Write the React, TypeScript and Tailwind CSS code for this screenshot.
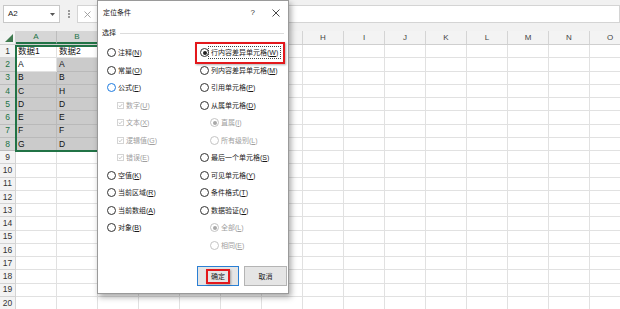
import React from "react";

const COLS = ["A", "B", "C", "D", "E", "F", "G", "H", "I", "J", "K", "L", "M", "N", "O"];

const DATA: Record<number, [string, string]> = {
  1: ["数据1", "数据2"],
  2: ["A", "A"],
  3: ["B", "B"],
  4: ["C", "H"],
  5: ["D", "D"],
  6: ["E", "E"],
  7: ["F", "F"],
  8: ["G", "D"],
};

const FONT = { fontFamily: '"Liberation Sans", "Noto Sans CJK SC", sans-serif' };

interface OptItem {
  kind: "radio" | "check";
  text: string;
  hot: string;
  checked?: boolean;
  disabled?: boolean;
  indent?: boolean;
  focus?: boolean;
  mark?: boolean;
}

const LEFT: OptItem[] = [
  { kind: "radio", text: "注释", hot: "N" },
  { kind: "radio", text: "常量", hot: "O" },
  { kind: "radio", text: "公式", hot: "F", focus: true },
  { kind: "check", text: "数字", hot: "U", checked: true, disabled: true, indent: true },
  { kind: "check", text: "文本", hot: "X", checked: true, disabled: true, indent: true },
  { kind: "check", text: "逻辑值", hot: "G", checked: true, disabled: true, indent: true },
  { kind: "check", text: "错误", hot: "E", checked: true, disabled: true, indent: true },
  { kind: "radio", text: "空值", hot: "K" },
  { kind: "radio", text: "当前区域", hot: "R" },
  { kind: "radio", text: "当前数组", hot: "A" },
  { kind: "radio", text: "对象", hot: "B" },
];

const RIGHT: OptItem[] = [
  { kind: "radio", text: "行内容差异单元格", hot: "W", checked: true, mark: true },
  { kind: "radio", text: "列内容差异单元格", hot: "M" },
  { kind: "radio", text: "引用单元格", hot: "P" },
  { kind: "radio", text: "从属单元格", hot: "D" },
  { kind: "radio", text: "直属", hot: "I", checked: true, disabled: true, indent: true },
  { kind: "radio", text: "所有级别", hot: "L", disabled: true, indent: true },
  { kind: "radio", text: "最后一个单元格", hot: "S" },
  { kind: "radio", text: "可见单元格", hot: "Y" },
  { kind: "radio", text: "条件格式", hot: "T" },
  { kind: "radio", text: "数据验证", hot: "V" },
  { kind: "radio", text: "全部", hot: "L", checked: true, disabled: true, indent: true },
  { kind: "radio", text: "相同", hot: "E", disabled: true, indent: true },
];

const Option: React.FC<{ o: OptItem }> = ({ o }) => {
  const color = o.disabled ? "text-[#a0a0a0]" : "text-[#1a1a1a]";
  return (
    <div className={`relative flex h-[17.5px] items-center ${o.indent ? "pl-[10px]" : ""}`}>
      {o.mark && (
        <div className="absolute left-[-5px] top-[-2px] h-[22px] w-[90px] border-2 border-[#e3181c] shadow-[1px_1px_2px_rgba(0,0,0,0.3)]" />
      )}
      {o.kind === "radio" ? (
        <span
          className={`flex h-[9px] w-[9px] shrink-0 items-center justify-center rounded-full border bg-white ${
            o.focus ? "border-[#1e7be0]" : o.disabled ? "border-[#c4c4c4]" : "border-[#333]"
          }`}
        >
          {o.checked && (
            <span className={`h-[4px] w-[4px] rounded-full ${o.disabled ? "bg-[#a8a8a8]" : "bg-[#222]"}`} />
          )}
        </span>
      ) : (
        <span className="flex h-[7px] w-[7px] shrink-0 items-center justify-center border border-[#d4d4d4] bg-white">
          <svg width="7" height="7" viewBox="0 0 7 7">
            <path d="M1 3.6 L2.8 5.3 L6 1.4" fill="none" stroke="#a8a8a8" strokeWidth="0.9" />
          </svg>
        </span>
      )}
      <span
        className={`ml-[2px] whitespace-nowrap text-[7px] leading-none ${color} ${
          o.mark ? "outline outline-1 outline-dotted outline-[#444] outline-offset-[2px]" : ""
        }`}
      >
        {o.text}(<u>{o.hot}</u>)
      </span>
    </div>
  );
};

const Dialog: React.FC = () => (
  <div
    className="absolute left-[97px] top-0 flex h-[294px] w-[192px] flex-col border border-[#9a9a9a] bg-white shadow-[2px_3px_6px_rgba(0,0,0,0.35)]"
    style={FONT}
  >
    <div className="flex h-[22px] items-center justify-between pl-[5px] pr-[8px] pt-[2px]">
      <span className="text-[7px] text-[#1a1a1a]">定位条件</span>
      <div className="flex items-center gap-[17px] text-[#333]">
        <span className="text-[8px]">?</span>
        <svg width="8" height="8" viewBox="0 0 8 8">
          <path d="M0.5 0.5 L7.5 7.5 M7.5 0.5 L0.5 7.5" stroke="#333" strokeWidth="0.9" />
        </svg>
      </div>
    </div>
    <div className="flex h-[21px] items-center pl-[4px] pr-[4px]">
      <span className="text-[7px] text-[#1a1a1a]">选择</span>
      <div className="ml-[4px] h-px flex-1 bg-[#dcdcdc]" />
    </div>
    <div className="grid grid-cols-[93px_1fr] pl-[9px]">
      <div className="flex flex-col">
        {LEFT.map((o, i) => (
          <Option key={i} o={o} />
        ))}
      </div>
      <div className="flex flex-col">
        {RIGHT.map((o, i) => (
          <Option key={i} o={o} />
        ))}
      </div>
    </div>
    <div className="mt-[12px] flex gap-[5px] pl-[99px]">
      <div className="flex h-[20px] w-[42px] items-center justify-center border border-[#2a7fd4] bg-[#e5e5e5]">
        <span className="border-2 border-[#e3181c] px-[3px] py-[2px] text-[7px] leading-none text-[#1a1a1a] shadow-[1px_1px_2px_rgba(0,0,0,0.3)]">
          确定
        </span>
      </div>
      <div className="flex h-[20px] w-[43px] items-center justify-center border border-[#b4b4b4] bg-[#e5e5e5]">
        <span className="text-[7px] leading-none text-[#1a1a1a]">取消</span>
      </div>
    </div>
  </div>
);

export default function App() {
  const rows = Array.from({ length: 20 }, (_, i) => i + 1);
  return (
    <div className="relative h-[309px] w-[620px] overflow-hidden bg-white" style={FONT}>
      {/* formula bar */}
      <div className="flex h-[31px] items-start bg-[#f1f1f1] pt-[5px] pl-[3px]">
        <div className="flex h-[18px] w-[57px] items-center justify-between border border-[#c8c8c8] bg-white pl-[4px] pr-[4px]">
          <span className="text-[8px] text-[#222]">A2</span>
          <svg width="5" height="3" viewBox="0 0 5 3">
            <path d="M0 0 L5 0 L2.5 3 Z" fill="#555" />
          </svg>
        </div>
        <div className="ml-[8px] mt-[5px] flex flex-col gap-[1.5px]">
          <span className="h-[1.5px] w-[1.5px] bg-[#999]" />
          <span className="h-[1.5px] w-[1.5px] bg-[#999]" />
          <span className="h-[1.5px] w-[1.5px] bg-[#999]" />
        </div>
        <div className="ml-[7px] flex h-[18px] flex-1 items-center border border-[#d4d4d4] bg-white pl-[6px]">
          <svg width="7" height="7" viewBox="0 0 7 7">
            <path d="M0.5 0.5 L6.5 6.5 M6.5 0.5 L0.5 6.5" stroke="#9a9a9a" strokeWidth="0.9" />
          </svg>
        </div>
      </div>

      {/* column headers */}
      <div className="flex h-[14px] border-b border-[#cfcfcf] bg-[#f3f3f3]">
        <div className="flex w-[16px] shrink-0 items-end justify-end border-r border-[#d4d4d4] pb-[2px] pr-[2px]">
          <svg width="8" height="8" viewBox="0 0 8 8">
            <path d="M8 0 L8 8 L0 8 Z" fill="#3f7a4f" />
          </svg>
        </div>
        {COLS.map((c, i) => (
          <div
            key={c}
            className={`flex w-[41px] shrink-0 items-center justify-center border-r text-[8px] ${
              i < 2
                ? "border-[#bdbdbd] border-b-2 border-b-[#217346] bg-[#d6d6d6] text-[#217346]"
                : "border-[#d4d4d4] text-[#444]"
            }`}
          >
            {c}
          </div>
        ))}
      </div>

      {/* rows */}
      {rows.map((r) => {
        const sel = r >= 2 && r <= 8;
        const d = DATA[r];
        return (
          <div key={r} className="flex h-[13.25px]">
            <div
              className={`flex w-[16px] shrink-0 items-center justify-center border-b border-r text-[8.5px] leading-none ${
                sel
                  ? "border-[#bdbdbd] border-r-[#217346] bg-[#d6d6d6] text-[#217346]"
                  : "border-[#d4d4d4] bg-[#f3f3f3] text-[#333]"
              }`}
            >
              {r}
            </div>
            {COLS.map((c, ci) => {
              const gray = ci < 2 && sel && !(r === 2 && ci === 0);
              return (
                <div
                  key={c}
                  className={`flex w-[41px] shrink-0 items-center border-b border-r pl-[2px] text-[8.5px] leading-none text-[#111] ${
                    gray ? "border-[#b9b9b9] bg-[#cbcbcb]" : "border-[#e1e1e1] bg-white"
                  }`}
                >
                  {d && ci < 2 ? d[ci] : ""}
                </div>
              );
            })}
          </div>
        );
      })}

      {/* selection outline */}
      <div className="pointer-events-none absolute left-[15px] top-[45px] h-[107px] w-[84px] border-2 border-[#217346]" />

      <Dialog />
    </div>
  );
}
